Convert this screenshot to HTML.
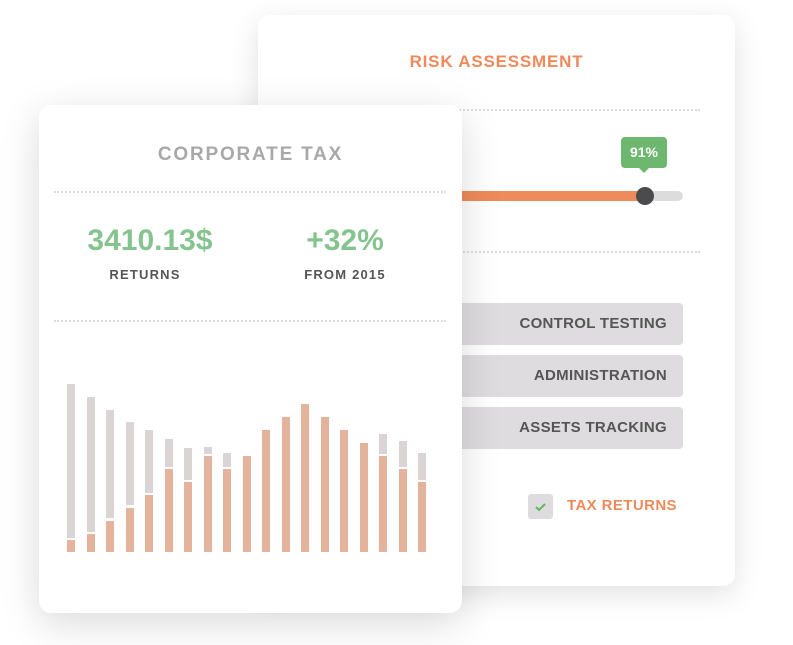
<!DOCTYPE html><html><head><style>
body{margin:0;width:793px;height:645px;background:#fff;position:relative;overflow:hidden;font-family:"Liberation Sans",sans-serif;font-weight:bold}
.a{position:absolute}
.card{position:absolute;background:#fff;border-radius:12px;box-shadow:0 8px 30px rgba(0,0,0,.12)}
.dots{position:absolute;height:0;border-top:2px dotted #dcdcdc}
.btn{position:absolute;left:440px;width:243px;height:42px;background:#dedcde;border-radius:4px;color:#555;font-size:15px;text-align:right;line-height:42px;box-sizing:border-box;padding-right:16px;letter-spacing:.3px}
.g{position:absolute;width:8px;background:#dad5d4}
.o{position:absolute;width:8px;background:#e3b39c}
</style></head><body>
<div class="card" style="left:258px;top:15px;width:477px;height:571px"></div>
<div class="a" style="left:258px;top:52px;width:477px;text-align:center;color:#ee8a5a;font-size:17px;letter-spacing:.8px">RISK ASSESSMENT</div>
<div class="dots" style="left:280px;top:109px;width:420px"></div>
<div class="dots" style="left:280px;top:251px;width:420px"></div>
<div class="a" style="left:440px;top:191px;width:243px;height:10px;border-radius:5px;background:#dcdcdc"></div>
<div class="a" style="left:440px;top:191px;width:205px;height:10px;border-radius:5px 0 0 5px;background:#ef8a5a"></div>
<div class="a" style="left:636px;top:187px;width:18px;height:18px;border-radius:50%;background:#4b4b4d"></div>
<div class="a" style="left:621px;top:137px;width:46px;height:31px;border-radius:4px;background:#6db76f;color:#fff;font-size:14px;text-align:center;line-height:31px">91%</div>
<div class="a" style="left:638px;top:167px;width:0;height:0;border-left:6px solid transparent;border-right:6px solid transparent;border-top:6px solid #6db76f"></div>
<div class="btn" style="top:303px">CONTROL TESTING</div>
<div class="btn" style="top:355px">ADMINISTRATION</div>
<div class="btn" style="top:407px">ASSETS TRACKING</div>
<div class="a" style="left:528px;top:494px;width:25px;height:25px;border-radius:3px;background:#dedcde"><svg width="25" height="25"><path d="M8 13l3 3 6-6" stroke="#5cb85c" stroke-width="2" fill="none"/></svg></div>
<div class="a" style="left:567px;top:497px;color:#ee8a5a;font-size:15px;letter-spacing:.4px">TAX RETURNS</div>

<div class="card" style="left:39px;top:105px;width:423px;height:508px;box-shadow:0 10px 40px rgba(0,0,0,.15)"></div>
<div class="a" style="left:39px;top:144px;width:423px;text-align:center;color:#a8a8a8;font-size:19px;letter-spacing:1.8px">CORPORATE TAX</div>
<div class="dots" style="left:54px;top:191px;width:392px"></div>
<div class="dots" style="left:54px;top:320px;width:392px"></div>
<div class="a" style="left:60px;top:224px;width:180px;text-align:center;color:#86c48f;font-size:30px;letter-spacing:0">3410.13$</div>
<div class="a" style="left:60px;top:267px;width:170px;text-align:center;color:#555;font-size:13px;letter-spacing:1.2px">RETURNS</div>
<div class="a" style="left:255px;top:224px;width:180px;text-align:center;color:#86c48f;font-size:30px">+32%</div>
<div class="a" style="left:255px;top:267px;width:180px;text-align:center;color:#555;font-size:13px;letter-spacing:1.2px">FROM 2015</div>
<div id="bars"></div>
<script>
var d=[[384,538,540],[397,532,534],[410,518,521],[422,505,508],[430,493,495],[439,467,469],[448,480,482],[447,454,456],[453,467,469],[0,0,456],[0,0,430],[0,0,417],[0,0,404],[0,0,417],[0,0,430],[0,0,443],[434,454,456],[441,467,469],[453,480,482]];
var h='';d.forEach(function(b,i){var x=67+i*19.5;if(b[0])h+='<div class="g" style="left:'+x+'px;top:'+b[0]+'px;height:'+(b[1]-b[0])+'px"></div>';h+='<div class="o" style="left:'+x+'px;top:'+b[2]+'px;height:'+(552-b[2])+'px"></div>';});
document.getElementById('bars').innerHTML=h;
</script>
</body></html>
